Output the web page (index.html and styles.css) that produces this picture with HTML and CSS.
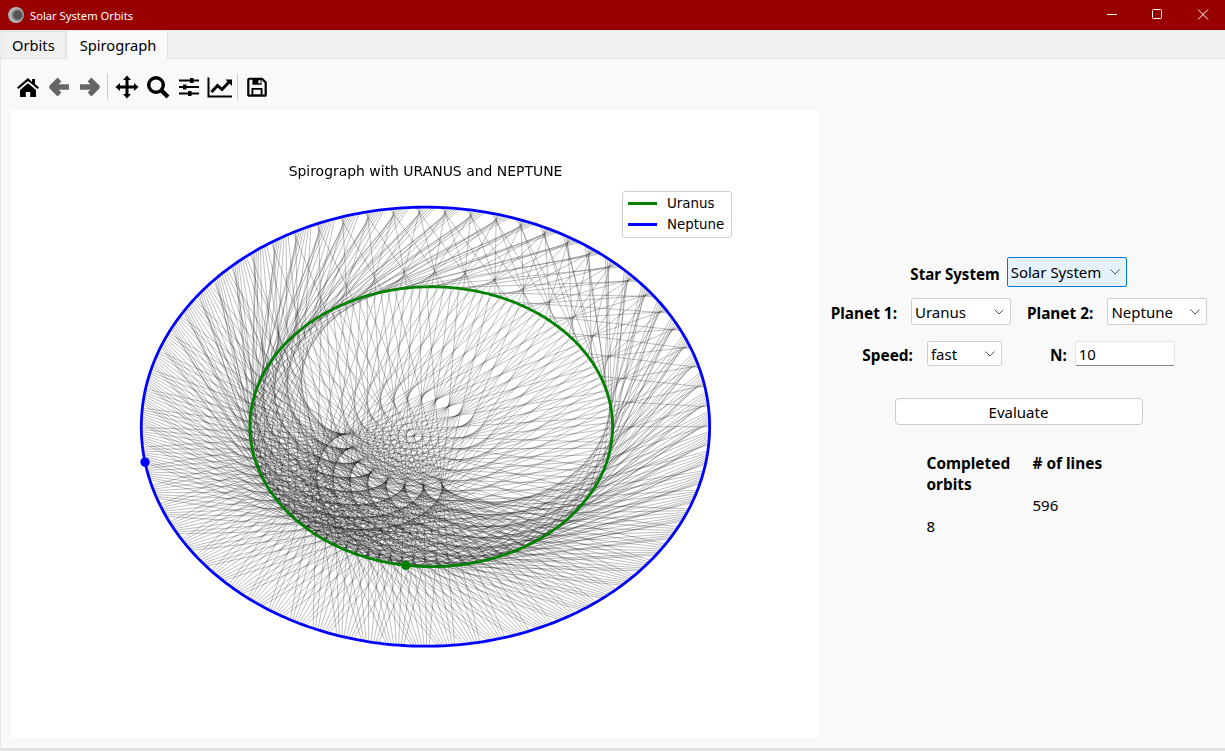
FILE: index.html
```html
<!DOCTYPE html>
<html lang="en">
<head>
    <meta charset="UTF-8">
    <title>Solar System Orbits</title>
    <link rel="stylesheet" href="styles.css">
</head>
<body>
    <div class="window">
        <header class="titlebar">
            <span class="app-icon"></span>
            <span class="app-title">Solar System Orbits</span>
            <div class="win-controls">
                <svg width="45" height="30" viewBox="0 0 45 30"><path d="M17 14.5h10" stroke="#fff" fill="none"/></svg>
                <svg width="45" height="30" viewBox="0 0 45 30"><rect x="17.5" y="9.5" width="9" height="9" rx="1" stroke="#fff" fill="none"/></svg>
                <svg width="45" height="30" viewBox="0 0 45 30"><path d="M18 9.5l10 10M28 9.5l-10 10" stroke="#fff" fill="none"/></svg>
            </div>
        </header>

        <nav class="tabs">
            <div class="tab">Orbits</div>
            <div class="tab active">Spirograph</div>
        </nav>

        <main class="panel">
            <section class="left">
                <div class="toolbar">
                    <button class="tool"><svg width="24" height="24" viewBox="0 0 24 24"><path d="M12 3L1 12.4l1.3 1.6L12 6l9.700 8 1.300-1.600-4-3.400V4h-3v3z"/><path d="M4 15l8-6.700L20 15v7h-5.800v-5H9.800v5H4z"/></svg></button>
                    <button class="tool"><svg width="24" height="24" viewBox="0 0 24 24"><path class="gray" d="M12.500 4.500L5 12l7.500 7.500M6.500 12H22"/></svg></button>
                    <button class="tool"><svg width="24" height="24" viewBox="0 0 24 24"><path class="gray" d="M11.500 4.500L19 12l-7.500 7.500M17.500 12H2"/></svg></button>
                    <span class="sep"></span>
                    <button class="tool"><svg width="24" height="24" viewBox="0 0 24 24"><path d="M12 .5L16 5h-2.500v5.500H19V8l4.500 4-4.500 4v-2.500h-5.500V19H16l-4 4.500L8 19h2.500v-5.500H5V16L.5 12 5 8v2.500h5.500V5H8z"/></svg></button>
                    <button class="tool"><svg width="24" height="24" viewBox="0 0 24 24"><circle class="line" cx="10" cy="10" r="7.300" stroke-width="3.400"/><path class="line" d="M15.500 15.500l6.500 6.500" stroke-width="4.200"/></svg></button>
                    <button class="tool"><svg width="24" height="24" viewBox="0 0 24 24"><path class="line" d="M2 5.500h20M2 12h20M2 18.500h20" stroke-width="2"/><path d="M13 3h3.500v5H13zM6 9.500h3.500v5H6zM11 16h3.500v5H11z"/></svg></button>
                    <button class="tool"><svg width="26" height="24" viewBox="0 0 26 24"><path class="line" d="M1.500 2.500v19H25" stroke-width="2"/><path class="line" d="M4.500 17l6-6.500 4.500 4 7-7.500" stroke-width="3"/><path d="M18.500 4.500H25V11z"/></svg></button>
                    <span class="sep"></span>
                    <button class="tool"><svg width="22" height="22" viewBox="0 0 24 24"><path class="line" d="M3.500 3h14l4 4v14a.5.5 0 0 1-.5.500H3a.5.5 0 0 1-.5-.5V4a1 1 0 0 1 1-1z" stroke-width="2.400"/><path d="M7 3h10v6.500H7zM6 13h12v8H6z"/><path d="M13.500 4.500H16v3.500h-2.500zM8 15h8v5H8z" fill="#f9f9f9"/></svg></button>
                </div>
                <div class="plot">
                    <canvas id="spiro" width="808" height="628"></canvas>
                    <div class="plot-title">Spirograph with URANUS and NEPTUNE</div>
                    <div class="legend">
                        <div class="legend-row"><span class="swatch green"></span>Uranus</div>
                        <div class="legend-row"><span class="swatch blue"></span>Neptune</div>
                    </div>
                </div>
            </section>

            <aside class="side">
                <div class="row row-star">
                    <label>Star System</label>
                    <div class="select focus star"><select><option>Solar System</option></select><svg class="chev" width="10" height="6" viewBox="0 0 10 6"><path d="M.5.500L5 5 9.500.500"/></svg></div>
                </div>
                <div class="row row-planets">
                    <label>Planet 1:</label>
                    <div class="select planet"><select><option>Uranus</option></select><svg class="chev" width="10" height="6" viewBox="0 0 10 6"><path d="M.5.500L5 5 9.500.500"/></svg></div>
                    <label class="second">Planet 2:</label>
                    <div class="select planet"><select><option>Neptune</option></select><svg class="chev" width="10" height="6" viewBox="0 0 10 6"><path d="M.5.500L5 5 9.500.500"/></svg></div>
                </div>
                <div class="row row-speed">
                    <label>Speed:</label>
                    <div class="select speed"><select><option>fast</option></select><svg class="chev" width="10" height="6" viewBox="0 0 10 6"><path d="M.5.500L5 5 9.500.500"/></svg></div>
                    <label class="n-label">N:</label>
                    <input class="n-input" type="text" value="10">
                </div>
                <button class="evaluate">Evaluate</button>
                <div class="results">
                    <b>Completed orbits</b>
                    <b># of lines</b>
                    <span class="val-orbits">8</span>
                    <span>596</span>
                </div>
            </aside>
        </main>
    </div>
    <script src="spiro.js"></script>
</body>
</html>
```

FILE: styles.css
```css
* {
    box-sizing: border-box;
}
body {
    margin: 0;
    background: #f0f0f0;
    font-family: "Noto Sans", sans-serif;
    font-size: 15px;
    color: #000;
}
.window {
    width: 1225px;
    height: 751px;
    display: flex;
    flex-direction: column;
    overflow: hidden;
    border-bottom: 3px solid #e2e2e2;
}
.titlebar {
    height: 30px;
    flex: none;
    display: flex;
    align-items: center;
    background: #990000;
    color: #fff;
    padding-left: 8px;
}
.app-icon {
    width: 16px;
    height: 16px;
    border-radius: 50%;
    background: radial-gradient(circle at 60% 50%, #555 0 30%, #bbb 55%, #888 100%);
}
.app-title {
    margin-left: 6px;
    font-size: 11.2px;
}
.win-controls {
    margin-left: auto;
    display: flex;
    height: 30px;
}
.tabs {
    height: 29px;
    flex: none;
    display: flex;
    align-items: flex-end;
    padding-left: 1px;
    background: #f0f0f0;
    border-bottom: 1px solid #e4e4e4;
}
.tab {
    height: 27px;
    padding: 0 10px;
    line-height: 26px;
    font-size: 14.7px;
    border: 1px solid #e4e4e4;
    border-bottom: none;
}
.tab.active {
    height: 29px;
    line-height: 29px;
    padding: 0 11px 0 13px;
    background: #f9f9f9;
    margin-bottom: -1px;
}
.panel {
    flex: 1;
    display: flex;
    background: #f9f9f9;
    padding-left: 11px;
    border-left: 1px solid #e8e8e8;
    min-height: 0;
}
.left {
    width: 808px;
    margin-left: -1px;
    flex: none;
}
.toolbar {
    height: 51px;
    display: flex;
    align-items: center;
    padding: 4px 0 0 1px;
}
.tool {
    width: 31px;
    height: 30px;
    padding: 0;
    display: flex;
    align-items: center;
    justify-content: center;
    background: none;
    border: none;
}
.tool .line, .tool .gray {
    fill: none;
    stroke: #000;
}
.tool .gray {
    stroke: #666;
    stroke-width: 5.4;
    stroke-linejoin: round;
}
.sep {
    width: 1px;
    height: 26px;
    margin: 0 3px 0 2px;
    background: #ccc;
}
.plot {
    position: relative;
    width: 808px;
    height: 628px;
    background: #fff;
}
.plot canvas {
    display: block;
}
.plot-title {
    position: absolute;
    top: 52px;
    left: 0;
    width: 829px;
    text-align: center;
    font-family: "DejaVu Sans", sans-serif;
    font-size: 13.95px;
    line-height: 18px;
}
.legend {
    position: absolute;
    top: 81px;
    left: 611px;
    width: 110px;
    height: 47px;
    padding: 1px 0 0 5px;
    background: #fff;
    border: 1px solid #d0d0d0;
    border-radius: 3px;
    font-family: "DejaVu Sans", sans-serif;
    font-size: 13.4px;
}
.legend-row {
    height: 21px;
    display: flex;
    align-items: center;
}
.swatch {
    width: 29px;
    height: 3px;
    margin-right: 10px;
}
.green {
    background: #008000;
}
.blue {
    background: #0000ff;
}
.side {
    flex: 1;
    display: flex;
    flex-direction: column;
    align-items: center;
    padding-top: 198px;
    padding-right: 7px;
}
.row {
    display: flex;
    align-items: center;
}
.row label, .results b {
    font-weight: 700;
    font-size: 15.4px;
}
.row label {
    margin-top: 3px;
}
.select {
    position: relative;
}
.select select {
    display: block;
    width: 100%;
    height: 100%;
    appearance: none;
    padding: 0 0 0 3px;
    background: #fff;
    border: 1px solid #d0d0d0;
    border-radius: 2px;
    font: inherit;
    color: #000;
}
.chev {
    position: absolute;
    right: 7px;
    top: 50%;
    margin-top: -3px;
    fill: none;
    stroke: #555;
}
.focus select {
    background: #e5f1fb;
    border-color: #0078d4;
}
.row-star {
    height: 30px;
}
.row-star label {
    font-size: 15.1px;
}
.star {
    width: 120px;
    height: 30px;
    margin-left: 7px;
}
.row-planets {
    height: 27px;
    margin-top: 11px;
    margin-left: 1px;
}
.planet {
    width: 100px;
    height: 27px;
    margin-left: 14px;
}
.second {
    margin-left: 16px;
}
.row-speed {
    height: 25px;
    margin-top: 16px;
}
.speed {
    width: 75px;
    height: 25px;
    margin-left: 14px;
}
.n-label {
    margin-left: 48px;
}
.n-input {
    width: 100px;
    height: 25px;
    margin-left: 8px;
    padding: 0 3px;
    border: 1px solid #e4e4e4;
    border-bottom-color: #868686;
    border-radius: 2px;
    font: inherit;
    background: #fff;
}
.evaluate {
    width: 248px;
    height: 27px;
    margin-top: 32px;
    padding: 0;
    background: #fff;
    border: 1px solid #ccc;
    border-radius: 4px;
    font: inherit;
}
.results {
    width: 186px;
    margin-top: 28px;
    margin-left: 2px;
    display: grid;
    grid-template-columns: 106px 80px;
    grid-template-rows: 42px 42px;
    line-height: 21px;
}
.val-orbits {
    grid-row: 2;
    grid-column: 1;
    align-self: end;
}
```

FILE: spiro.js
```js
// line between the two planets every N steps, drawn on the plot
const ctx = document.getElementById('spiro').getContext('2d');

// sun sits at the focus, perihelion points left
const sun = [411.9, 316.7];
const scaleX = 9.45;
const scaleY = 7.3;
const uranus = { a: 19.19, e: 0.046, color: '#008000', turns: 16.735 };
const neptune = { a: 30.07, e: 0.009, color: '#0000ff', turns: 8.526 };
const nLines = 596;

function orbitPoint(p, theta) {
    const r = p.a * (1 - p.e * p.e) / (1 - p.e * Math.cos(theta));
    return [sun[0] + scaleX * r * Math.cos(theta), sun[1] - scaleY * r * Math.sin(theta)];
}

function point(p, i) {
    return orbitPoint(p, 2 * Math.PI * p.turns * i / nLines);
}

ctx.lineWidth = 0.5;
ctx.strokeStyle = 'rgba(0, 0, 0, 0.5)';
for (let i = 0; i <= nLines; i++) {
    const u = point(uranus, i);
    const n = point(neptune, i);
    ctx.beginPath();
    ctx.moveTo(u[0], u[1]);
    ctx.lineTo(n[0], n[1]);
    ctx.stroke();
}

for (const p of [uranus, neptune]) {
    ctx.lineWidth = 2.8;
    ctx.strokeStyle = p.color;
    ctx.beginPath();
    for (let t = 0; t <= 360; t++) {
        const q = orbitPoint(p, t * Math.PI / 180);
        ctx.lineTo(q[0], q[1]);
    }
    ctx.closePath();
    ctx.stroke();

    const end = point(p, nLines);
    ctx.fillStyle = p.color;
    ctx.beginPath();
    ctx.arc(end[0], end[1], 4.7, 0, 2 * Math.PI);
    ctx.fill();
}
```
